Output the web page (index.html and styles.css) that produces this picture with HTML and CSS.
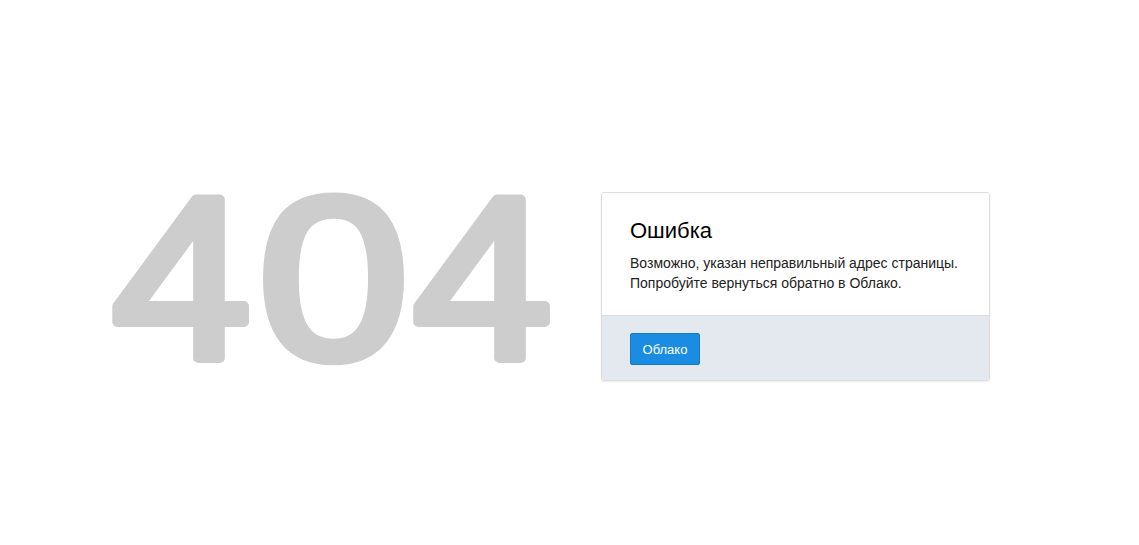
FILE: index.html
```html
<!DOCTYPE html>
<html>
<head>
    <title>Ошибка 404</title>
    <link rel="stylesheet" href="styles.css">
</head>
<body>
    <div class="page">
        <svg class="code" width="460" height="260" viewBox="0 0 460 260">
            <!-- rounded digits: stroke with round joins -->
            <text transform="translate(81.5 208) scale(1.085 1)">4</text>
            <text transform="translate(233.5 208) scale(1.175 1)">0</text>
            <text transform="translate(382.5 208) scale(1.085 1)">4</text>
        </svg>
        <div class="card">
            <div class="card-body">
                <h1>Ошибка</h1>
                <p>Возможно, указан неправильный адрес страницы.<br>Попробуйте вернуться обратно в Облако.</p>
            </div>
            <div class="card-footer">
                <button class="btn">Облако</button>
            </div>
        </div>
    </div>
</body>
</html>
```

FILE: styles.css
```css
body {
    margin: 0;
    background-color: #fff;
    font-family: "Liberation Sans", Arial, sans-serif;
    color: #333;
}

.page {
    display: flex;
    align-items: flex-start;
    padding-top: 150px;
    padding-left: 100px;
}

.code {
    display: block;
    flex-shrink: 0;
    margin-right: 41px;
    overflow: visible;
}

.code text {
    font-family: "Liberation Sans", Arial, sans-serif;
    font-size: 230px;
    font-weight: normal;
    fill: #cdcdcd;
    stroke: #cdcdcd;
    stroke-width: 10px;
    stroke-linejoin: round;
    text-anchor: middle;
}

.card {
    width: 387px;
    margin-top: 42px;
    border: 1px solid #dcdcdc;
    border-radius: 3px;
    box-shadow: 0 1px 2px rgba(0, 0, 0, 0.08);
    overflow: hidden;
}

.card-body {
    padding: 24px 28px 22px;
    background-color: #fff;
    border-bottom: 1px solid #d6dde5;
}

h1 {
    margin: 0 0 8px;
    font-size: 22px;
    font-weight: normal;
    color: #000;
    line-height: 28px;
}

p {
    margin: 0;
    font-size: 14px;
    line-height: 20px;
    color: #222;
}

.card-footer {
    background-color: #e3e9ef;
    padding: 17px 28px 15px;
}

.btn {
    display: block;
    width: 70px;
    height: 32px;
    padding: 0;
    background-color: #1a8de2;
    border: 1px solid #1679c4;
    border-radius: 2px;
    color: #fff;
    font-family: "Liberation Sans", Arial, sans-serif;
    font-size: 13px;
    cursor: pointer;
}
```
